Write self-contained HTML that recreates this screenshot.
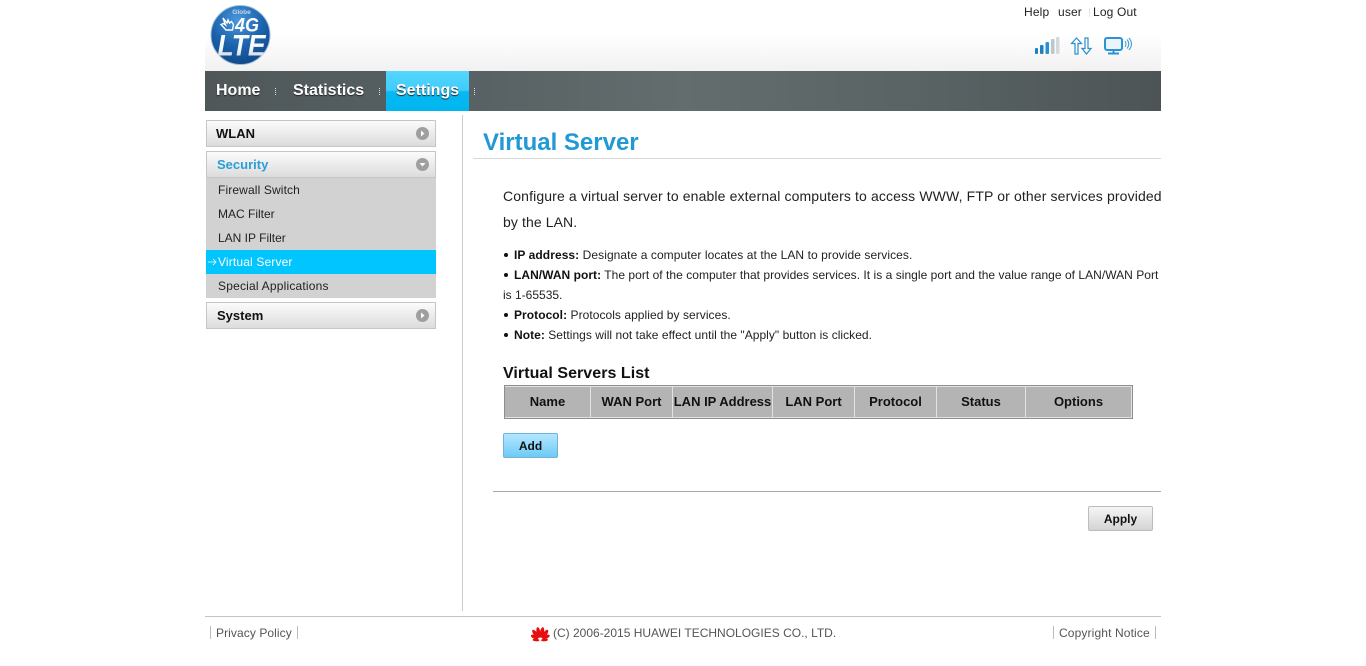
<!DOCTYPE html>
<html><head><meta charset="utf-8"><title>Virtual Server</title>
<style>
html,body{margin:0;padding:0;background:#fff;width:1366px;height:666px;overflow:hidden}
body{font-family:"Liberation Sans",Arial,sans-serif;color:#000;position:relative}
.a{position:absolute;white-space:nowrap}
.head{position:absolute;left:205px;top:0;width:956px;height:71px;background:linear-gradient(#fff 0,#fff 35px,#f1f1f1 71px)}
.nav{position:absolute;left:205px;top:71px;width:956px;height:40px;background:linear-gradient(90deg,#4f5759 0,#566062 25%,#636d6e 50%,#596364 75%,#4d5456 100%)}
.nt{position:absolute;top:71px;height:40px;line-height:39px;font-size:16px;font-weight:bold;color:#fff;text-shadow:0 1px 1px #222}
.dots{position:absolute;top:88px;width:1px;height:7px;background:repeating-linear-gradient(#ddd 0,#ddd 1px,transparent 1px,transparent 2px)}
.acc{position:absolute;left:206px;width:228px;height:25px;border:1px solid #c6c6c6;background:linear-gradient(#fbfbfb,#dcdcdc);line-height:26px;font-size:13px;font-weight:bold}
.acc span{position:absolute;left:10px;top:0}
.ic{position:absolute;left:416px;width:13px;height:13px}
.sub{position:absolute;left:206px;width:230px;height:24px;background:#d2d2d2;font-size:12px;line-height:24px;color:#222}
.sub span{position:absolute;left:12px;top:0}
.p{position:absolute;left:503px;font-size:12px;white-space:nowrap;color:#222}
.th{position:absolute;top:387px;height:30px;line-height:29px;background:#b4b4b4;text-align:center;font-size:13px;font-weight:bold;color:#111;white-space:nowrap;overflow:hidden}
.ft{font-size:12px;color:#555}
.b{position:absolute;left:504px;width:4px;height:4px;border-radius:50%;background:#111}
</style></head><body>
<div class="head"></div>

<svg class="a" style="left:209px;top:4px" width="63" height="62" viewBox="0 0 63 62">
<defs><radialGradient id="g" cx="45%" cy="25%" r="80%"><stop offset="0" stop-color="#4a97da"/><stop offset=".55" stop-color="#1b62ad"/><stop offset="1" stop-color="#0e4686"/></radialGradient>
<linearGradient id="w" x1="0" y1="0" x2="0" y2="1"><stop offset="0" stop-color="#fff"/><stop offset=".6" stop-color="#f4f6f8"/><stop offset="1" stop-color="#b9c2cc"/></linearGradient></defs>
<circle cx="31.500" cy="31" r="29.500" fill="url(#g)" stroke="#9dbcd8" stroke-width="1"/>
<text x="32.500" y="10" font-family="Liberation Sans" font-size="6.500" font-weight="bold" fill="#c6d9ea" text-anchor="middle">Globe</text>
<path d="M14 14l4 5 1-3 1.500 3 2-1.500 2 3-1 5.500h-6.500l-5-5.500 2.500-1 2 1.500z" fill="none" stroke="#fff" stroke-width="1.400"/>
<text x="26" y="27.500" font-family="Liberation Sans" font-size="19" font-weight="bold" font-style="italic" fill="#fff" textLength="24" lengthAdjust="spacingAndGlyphs">4G</text>
<text x="8.500" y="51.500" font-family="Liberation Sans" font-size="30" font-weight="bold" font-style="italic" fill="url(#w)" textLength="48" lengthAdjust="spacingAndGlyphs">LTE</text>
</svg>

<div class="a" style="left:1024px;top:5px;font-size:12px;line-height:15px;color:#222;letter-spacing:.15px">Help</div>
<div class="a" style="left:1058px;top:5px;font-size:12px;line-height:15px;color:#222;letter-spacing:.15px">user</div>
<div class="a" style="left:1093px;top:5px;font-size:12px;line-height:15px;color:#222;letter-spacing:.15px">Log Out</div>
<div class="a" style="left:1089px;top:8px;width:1px;height:9px;background:#e6e6e6"></div>

<svg class="a" style="left:1034px;top:36px" width="100" height="20" viewBox="0 0 100 20">
<rect x="1" y="12" width="3" height="6" rx="1" fill="#1f80c0"/>
<rect x="6" y="9" width="3.500" height="9" rx="1" fill="#1f80c0"/>
<rect x="11.500" y="6" width="3.500" height="12" rx="1" fill="#2a8fcc"/>
<rect x="17" y="3" width="3.500" height="15" rx="1" fill="#b9c8d0"/>
<rect x="22" y="1" width="3.500" height="17" rx="1" fill="#d6d9da"/>
<path d="M41 18V7.500h-3.500L42.500 2l5 5.500H44V18z" fill="none" stroke="#2a8fcc" stroke-width="1.200"/>
<path d="M51 2h3v10.500h3l-4.500 5.500L48 12.500h3z" fill="none" stroke="#2a8fcc" stroke-width="1.200"/>
<rect x="71" y="2" width="17" height="12" rx="2" fill="#eaf4fa" stroke="#2a93d5" stroke-width="2"/>
<path d="M74 17.500h11M79.500 15v3" stroke="#2a93d5" stroke-width="2"/>
<path d="M91 5q2 3 0 6M93 3.500q3.500 4.500 0 9M95 2q5 6 0 12" fill="none" stroke="#4a9fd4" stroke-width="1.100"/>
</svg>

<div class="nav"></div>
<div class="a" style="left:386px;top:71px;width:83px;height:40px;background:linear-gradient(#55d6ff 0,#3fcdfb 48%,#08b8f2 52%,#00b6f0 100%)"></div>
<div class="nt a" style="left:216px">Home</div>
<div class="nt a" style="left:293px">Statistics</div>
<div class="nt a" style="left:396px">Settings</div>
<div class="dots" style="left:275px"></div>
<div class="dots" style="left:379px"></div>
<div class="dots" style="left:474px"></div>

<div class="acc" style="top:120px"><span style="left:9px;color:#111">WLAN</span></div>
<svg class="ic" style="top:127px" viewBox="0 0 13 13"><circle cx="6.500" cy="6.500" r="6.500" fill="#9f9f9f"/><path d="M5 3.500l3.500 3-3.500 3z" fill="#fff"/></svg>

<div class="acc" style="top:151px;height:25px"><span style="color:#2a9fd6">Security</span></div>
<svg class="ic" style="top:158px" viewBox="0 0 13 13"><circle cx="6.500" cy="6.500" r="6.500" fill="#9f9f9f"/><path d="M3.500 5h6l-3 3.500z" fill="#fff"/></svg>
<div class="sub" style="top:178px"><span style="letter-spacing:.13px">Firewall Switch</span></div>
<div class="sub" style="top:202px"><span>MAC Filter</span></div>
<div class="sub" style="top:226px"><span>LAN IP Filter</span></div>
<div class="sub" style="top:250px;background:#00c5ff;color:#fff"><span style="letter-spacing:.15px">Virtual Server</span><svg class="a" style="left:2px;top:8px" width="9" height="8" viewBox="0 0 9 8"><path d="M0 4h8M5 1l3 3-3 3" fill="none" stroke="#fff" stroke-width=".8"/></svg></div>
<div class="sub" style="top:274px"><span style="letter-spacing:.2px">Special Applications</span></div>
<div class="acc" style="top:302px"><span style="color:#111">System</span></div>
<svg class="ic" style="top:309px" viewBox="0 0 13 13"><circle cx="6.500" cy="6.500" r="6.500" fill="#9f9f9f"/><path d="M5 3.500l3.500 3-3.500 3z" fill="#fff"/></svg>

<div class="a" style="left:462px;top:115px;width:1px;height:496px;background:#ccc"></div>

<div class="a" style="left:483px;top:128px;font-size:24px;line-height:30px;font-weight:bold;color:#2299d4">Virtual Server</div>
<div class="a" style="left:473px;top:158px;width:688px;height:1px;background:#d8d8d8"></div>

<div class="p" style="top:188px;font-size:14px;line-height:17px;letter-spacing:.13px">Configure a virtual server to enable external computers to access WWW, FTP or other services provided</div>
<div class="p" style="top:214px;font-size:14px;line-height:17px;letter-spacing:.1px">by the LAN.</div>

<div class="b" style="top:253px"></div>
<div class="p" style="left:514px;top:248px;line-height:15px;letter-spacing:.07px"><b style="color:#111">IP address:</b> Designate a computer locates at the LAN to provide services.</div>
<div class="b" style="top:273px"></div>
<div class="p" style="left:514px;top:268px;line-height:15px;letter-spacing:.035px"><b style="color:#111">LAN/WAN port:</b> The port of the computer that provides services. It is a single port and the value range of LAN/WAN Port</div>
<div class="p" style="top:288px;line-height:15px">is 1-65535.</div>
<div class="b" style="top:313px"></div>
<div class="p" style="left:514px;top:308px;line-height:15px;letter-spacing:.05px"><b style="color:#111">Protocol:</b> Protocols applied by services.</div>
<div class="b" style="top:333px"></div>
<div class="p" style="left:514px;top:328px;line-height:15px;letter-spacing:.04px"><b style="color:#111">Note:</b> Settings will not take effect until the "Apply" button is clicked.</div>

<div class="a" style="left:503px;top:365px;font-size:16px;line-height:18px;font-weight:bold;color:#111;letter-spacing:.05px">Virtual Servers List</div>

<div class="a" style="left:504px;top:385px;width:627px;height:32px;border:1px solid #8e8e8e;background:#e2e2e2"></div>
<div class="th" style="left:505px;width:85px">Name</div>
<div class="th" style="left:591px;width:81px">WAN Port</div>
<div class="th" style="left:673px;width:99px">LAN IP Address</div>
<div class="th" style="left:773px;width:81px">LAN Port</div>
<div class="th" style="left:855px;width:81px">Protocol</div>
<div class="th" style="left:937px;width:88px">Status</div>
<div class="th" style="left:1026px;width:105px">Options</div>

<div class="a" style="left:503px;top:433px;width:53px;height:23px;border:1px solid #6fb3d6;border-radius:2px;background:linear-gradient(#b5e6ff,#6ccbf7);text-align:center;font-size:12px;font-weight:bold;line-height:24px;color:#111">Add</div>

<div class="a" style="left:493px;top:491px;width:668px;height:1px;background:#a8a8a8"></div>

<div class="a" style="left:1088px;top:506px;width:63px;height:23px;border:1px solid #bcbcbc;border-radius:2px;background:linear-gradient(#f5f5f5,#d4d4d4);text-align:center;font-size:12px;font-weight:bold;line-height:25px;color:#111">Apply</div>

<div class="a" style="left:205px;top:616px;width:956px;height:1px;background:#c4c4c4"></div>
<div class="a" style="left:210px;top:626px;width:1px;height:13px;background:#bbb"></div>
<div class="a ft" style="left:216px;top:626px;line-height:15px;letter-spacing:.08px">Privacy Policy</div>
<div class="a" style="left:297px;top:626px;width:1px;height:13px;background:#bbb"></div>
<svg class="a" style="left:531px;top:626px" width="19" height="16" viewBox="0 0 19 16">
<g fill="#e60f0f"><ellipse cx="7.500" cy="6.500" rx="2" ry="5.500" transform="rotate(-10 7.500 6.500)"/><ellipse cx="11" cy="6.500" rx="2" ry="5.500" transform="rotate(10 11 6.500)"/><ellipse cx="4.500" cy="8" rx="2" ry="5" transform="rotate(-35 4.500 8)"/><ellipse cx="14" cy="8" rx="2" ry="5" transform="rotate(35 14 8)"/><ellipse cx="3.500" cy="11" rx="1.800" ry="4" transform="rotate(-65 3.500 11)"/><ellipse cx="15" cy="11" rx="1.800" ry="4" transform="rotate(65 15 11)"/><ellipse cx="5" cy="14" rx="1.300" ry="3.500" transform="rotate(-85 5 14)"/><ellipse cx="13.500" cy="14" rx="1.300" ry="3.500" transform="rotate(85 13.500 14)"/></g></svg>
<div class="a ft" style="left:553px;top:626px;line-height:15px">(C) 2006-2015 HUAWEI TECHNOLOGIES CO., LTD.</div>
<div class="a" style="left:1053px;top:626px;width:1px;height:13px;background:#bbb"></div>
<div class="a ft" style="left:1059px;top:626px;line-height:15px;letter-spacing:.13px">Copyright Notice</div>
<div class="a" style="left:1155px;top:626px;width:1px;height:13px;background:#bbb"></div>
</body></html>
